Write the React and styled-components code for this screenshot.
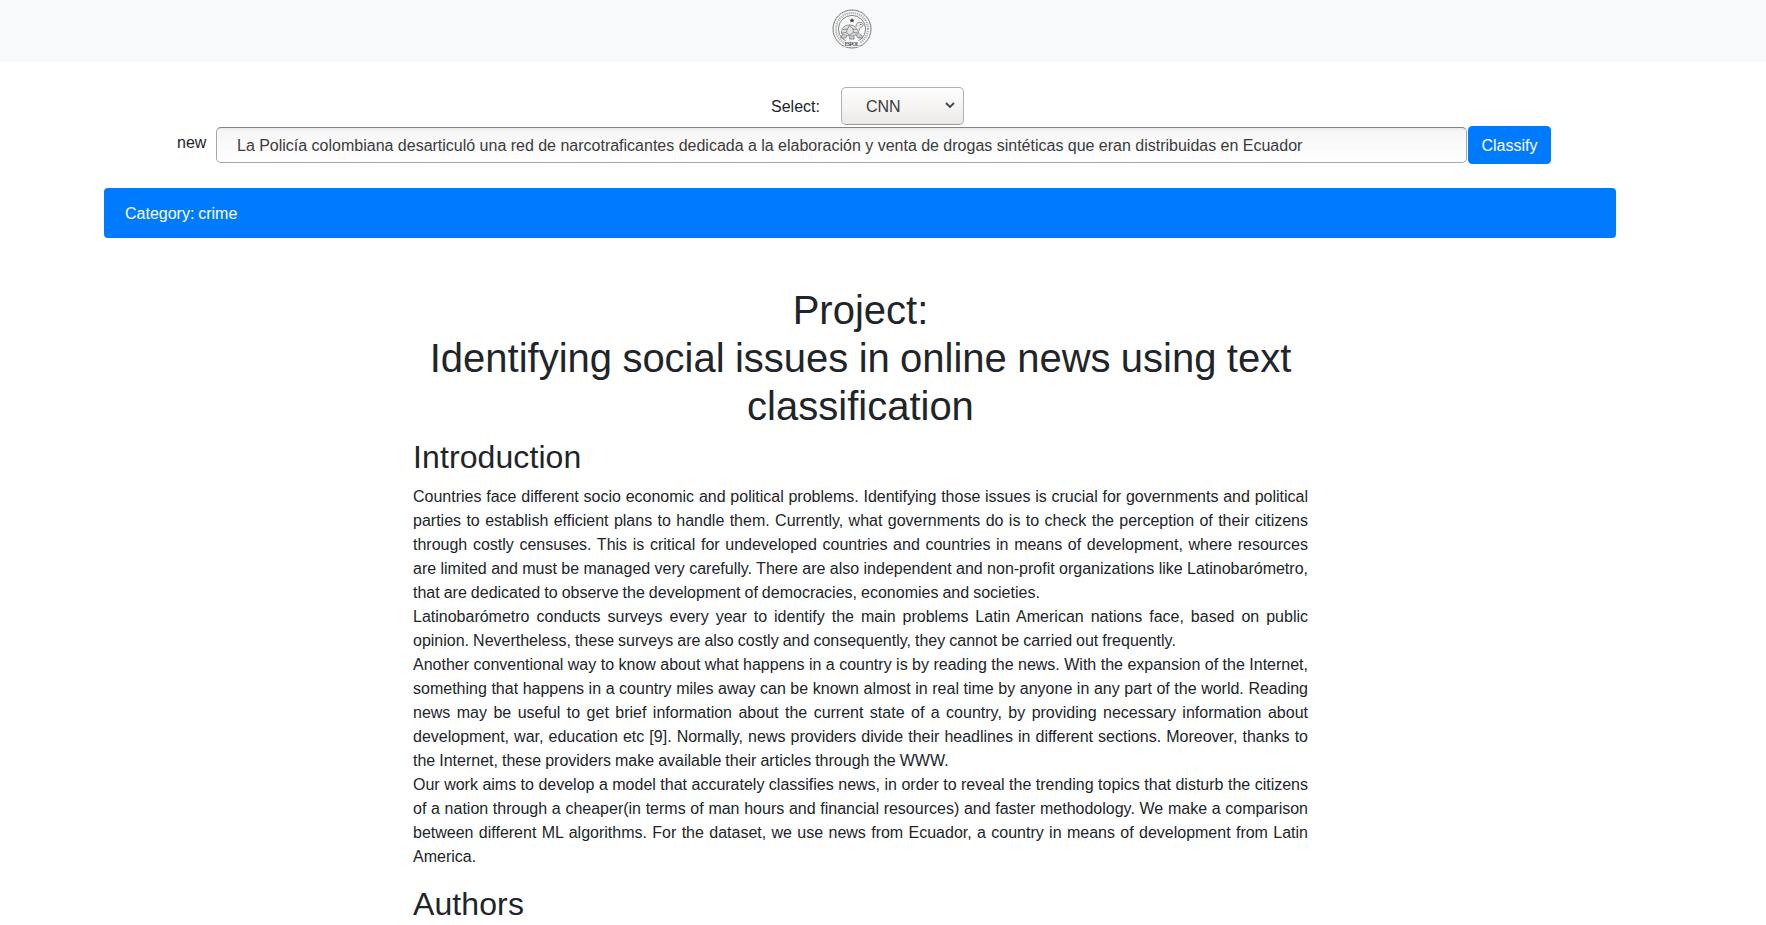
import React from "react";
import styled, { createGlobalStyle } from "styled-components";

const GlobalStyle = createGlobalStyle`
  *, *::before, *::after { box-sizing: border-box; }
  body {
    margin: 0;
    overflow: hidden;
    background: #fff;
    color: #212529;
    font: 400 16px/24px "Liberation Sans", Arial, sans-serif;
  }
`;

const Page = styled.div`
  height: 100vh;
  overflow: hidden;
`;

const Navbar = styled.nav`
  height: 62px;
  padding: 9px 62px 0 0;
  display: flex;
  justify-content: center;
  align-items: flex-start;
  background: #f8f9fa;
`;

const Logo = styled.svg`
  display: block;
  width: 40px;
  height: 40px;
`;

const Form = styled.form`
  padding: 25px 0 0 177px;
`;

const SelectRow = styled.div`
  display: flex;
  align-items: center;
  height: 38px;
  margin-left: 594px;
`;

const SelectLabel = styled.label`
  width: 70px;
  padding-top: 2px;
`;

const SelectBox = styled.span`
  display: grid;
  grid-template-columns: 1fr 18px;
  align-items: center;
  width: 123px;
  height: 38px;
  border: 1px solid #b3b1af;
  border-bottom-color: #9c9a98;
  border-radius: 5px;
  background: linear-gradient(#fefefe, #f4f3f2 60%, #ebe9e8);
`;

const Select = styled.select`
  grid-area: 1 / 1 / 2 / 3;
  width: 100%;
  height: 36px;
  padding: 2px 24px 0;
  appearance: none;
  border: 0;
  outline: 0;
  background: transparent;
  color: #3b3b3b;
  font: inherit;
`;

const Chevron = styled.svg`
  grid-area: 1 / 2;
  width: 10px;
  height: 7px;
  margin-bottom: 1px;
  pointer-events: none;
`;

const NewsRow = styled.div`
  display: flex;
  align-items: flex-start;
  margin-top: 1px;
`;

const NewsLabel = styled.label`
  width: 39px;
  padding-top: 5px;
`;

const NewsInput = styled.input`
  width: 1251px;
  height: 36px;
  margin: 1px 1px 0 0;
  padding: 1px 20px 0;
  border: 1px solid #a9a7a6;
  border-top-color: #858381;
  border-radius: 5px;
  outline: 0;
  background: linear-gradient(#e9e9e9, #f6f6f6 3px, #fff);
  color: #3b3b3b;
  font: inherit;
  word-spacing: -0.05px;
`;

const Button = styled.button`
  width: 83px;
  height: 38px;
  padding: 2px 0 0;
  border: 1px solid #007bff;
  border-radius: 4px;
  background: #007bff;
  color: #fff;
  font: inherit;
`;

const Alert = styled.div`
  width: 1512px;
  height: 50px;
  margin: 24px 0 0 104px;
  padding: 14px 21px 12px;
  border-radius: 4px;
  background: #007bff;
  color: #fff;
  word-spacing: -0.6px;
`;

const Article = styled.main`
  width: 895px;
  margin: 48px 0 0 413px;
`;

const Title = styled.h1`
  margin: 0 0 8px;
  font-size: 40px;
  font-weight: 400;
  line-height: 48px;
  text-align: center;
  word-spacing: -0.8px;
`;

const Heading = styled.h2`
  margin: 0 0 9px;
  font-size: 32px;
  font-weight: 400;
  line-height: 38.4px;
  letter-spacing: 0.1px;
`;

const Body = styled.p`
  margin: 0 0 16px;
  text-align: justify;
  word-spacing: -0.42px;
`;

function Seal() {
  return (
    <Logo viewBox="0 0 40 40" role="img" aria-label="ESPOL" fill="none" stroke="#777">
      <circle cx="20" cy="20" r="19" strokeWidth="1" />
      <circle cx="20" cy="20" r="16" strokeWidth="2.200" stroke="#b0b0b0" strokeDasharray="1.2 0.9" />
      <circle cx="20" cy="20" r="13.6" strokeWidth="0.9" />
      <path d="M20 9l.8 1.500 1.700.2-1.200 1.200.3 1.700-1.600-.8-1.600.8.3-1.700-1.200-1.200 1.700-.2z" fill="#444" stroke="none" />
      <g strokeWidth="0.8">
        <path d="M9.500 24.500c-.3-5.500 3-8.500 8-8.500s8.500 3 9 8.500c-4 3-12.500 3.200-17 0z" fill="#e2e2e2" />
        <path d="M11 20.500l4.500-.5 2-3.500 3.500 3.500 4.500.5M15.500 20l-1.500 3.500 3.500 2.500 4-2.500-.5-3.500M14 23.500l-4 .5M21.500 23.500l4.500.5" />
        <path d="M24 17.500c0-2.500 1.500-4.300 4-4.300 2.300 0 3.700 1.700 3 3.500-.7 1.500-2.200 1.600-3.200 2.500-.6.8-.3 2.300-1.300 3.300" fill="#e8e8e8" />
        <path d="M10.500 25.500l-2 3.500h5l1.500-2M24 25.500l2 3.500h5l-3-4.500M18 27l-.5 3h4.500v-3.500" fill="#ccc" />
        <path d="M28 15.500h1.500" stroke="#444" />
      </g>
      <rect x="12" y="31.800" width="16" height="5.800" fill="#f8f9fa" stroke="none" />
      <text x="20" y="36.800" textAnchor="middle" textLength="15" fontFamily="Liberation Serif, serif" fontSize="5.800" fontWeight="700" fill="#555" stroke="none">ESPOL</text>
    </Logo>
  );
}

export default function App() {
  return (
    <Page>
      <GlobalStyle />
      <Navbar><Seal /></Navbar>
      <Form onSubmit={(e) => e.preventDefault()}>
        <SelectRow>
          <SelectLabel htmlFor="model">Select:</SelectLabel>
          <SelectBox>
            <Select id="model" defaultValue="CNN"><option>CNN</option></Select>
            <Chevron viewBox="0 0 10 7" fill="none" stroke="#444" strokeWidth="1.8">
              <path d="M1 1l4 4 4-4" />
            </Chevron>
          </SelectBox>
        </SelectRow>
        <NewsRow>
          <NewsLabel htmlFor="news">new</NewsLabel>
          <NewsInput
            id="news"
            spellCheck={false}
            defaultValue="La Policía colombiana desarticuló una red de narcotraficantes dedicada a la elaboración y venta de drogas sintéticas que eran distribuidas en Ecuador"
          />
          <Button>Classify</Button>
        </NewsRow>
      </Form>
      <Alert>Category: crime</Alert>
      <Article>
        <Title>
          Project:<br />
          Identifying social issues in online news using text classification
        </Title>
        <Heading>Introduction</Heading>
        <Body>
          Countries face different socio economic and political problems. Identifying those issues is crucial for governments and political parties to establish efficient plans to handle them. Currently, what governments do is to check the perception of their citizens through costly censuses. This is critical for undeveloped countries and countries in means of development, where resources are limited and must be managed very carefully. There are also independent and non-profit organizations like Latinobarómetro, that are dedicated to observe the development of democracies, economies and societies.
          <br />
          Latinobarómetro conducts surveys every year to identify the main problems Latin American nations face, based on public opinion. Nevertheless, these surveys are also costly and consequently, they cannot be carried out frequently.
          <br />
          Another conventional way to know about what happens in a country is by reading the news. With the expansion of the Internet, something that happens in a country miles away can be known almost in real time by anyone in any part of the world. Reading news may be useful to get brief information about the current state of a country, by providing necessary information about development, war, education etc [9]. Normally, news providers divide their headlines in different sections. Moreover, thanks to the Internet, these providers make available their articles through the WWW.
          <br />
          Our work aims to develop a model that accurately classifies news, in order to reveal the trending topics that disturb the citizens of a nation through a cheaper(in terms of man hours and financial resources) and faster methodology. We make a comparison between different ML algorithms. For the dataset, we use news from Ecuador, a country in means of development from Latin America.
        </Body>
        <Heading>Authors</Heading>
      </Article>
    </Page>
  );
}
